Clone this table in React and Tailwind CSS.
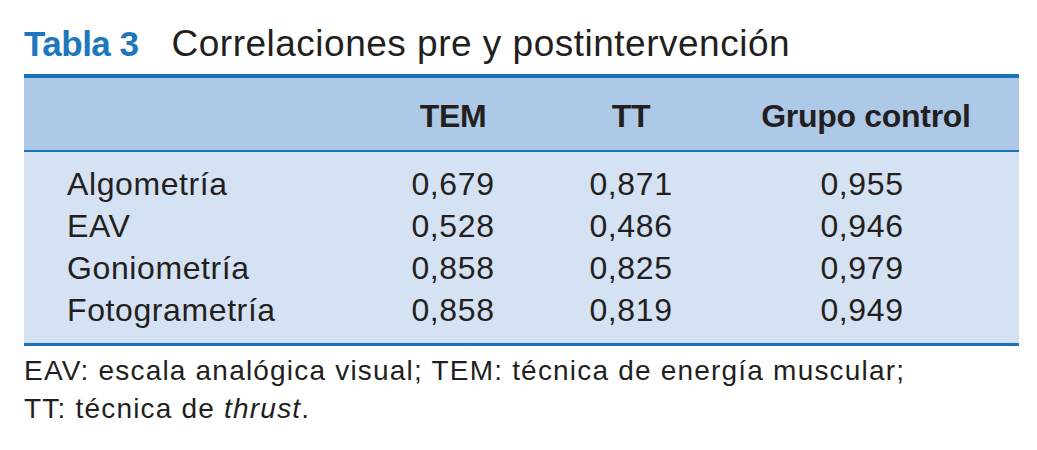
import React from 'react';

const rows = [
  { label: 'Algometría', tem: '0,679', tt: '0,871', control: '0,955' },
  { label: 'EAV', tem: '0,528', tt: '0,486', control: '0,946' },
  { label: 'Goniometría', tem: '0,858', tt: '0,825', control: '0,979' },
  { label: 'Fotogrametría', tem: '0,858', tt: '0,819', control: '0,949' },
];

const cols = 'grid grid-cols-[341px_176px_180px_290px]';

export default function App() {
  return (
    <div className="w-[1037px] h-[450px] bg-white pl-[24px] pr-[18px] pt-[22px] text-[#231f20] font-['Liberation_Sans',Arial,sans-serif]">
      <div className="flex items-baseline h-[44px] leading-[44px] whitespace-nowrap">
        <span className="text-[35px] font-bold text-[#1c77bd] tracking-[-0.5px]">Tabla 3</span>
        <span className="ml-[33px] text-[37px] tracking-[0.5px]">Correlaciones pre y postintervención</span>
      </div>

      <div className="mt-[8px] border-t-[4px] border-b-[3px] border-[#1b74b9]">
        <div className={`${cols} h-[74px] bg-[#aec9e7] border-b-[2px] border-[#1b74b9] pt-[3px] text-[32px] font-bold leading-[70px] tracking-[-0.3px]`}>
          <div></div>
          <div className="text-center">TEM</div>
          <div className="text-center">TT</div>
          <div className="text-center">Grupo control</div>
        </div>
        <div className="bg-[#d5e2f3] pt-[11px] pb-[12px] text-[32px] leading-[42px] tracking-[0.6px]">
          {rows.map((row) => (
            <div key={row.label} className={cols}>
              <div className="pl-[43px]">{row.label}</div>
              <div className="text-center">{row.tem}</div>
              <div className="text-center">{row.tt}</div>
              <div className="text-center pr-[8px]">{row.control}</div>
            </div>
          ))}
        </div>
      </div>

      <p className="mt-[6px] text-[28px] leading-[38px] tracking-[1.2px] whitespace-nowrap">
        EAV: escala analógica visual; TEM: técnica de energía muscular;
        <br />
        TT: técnica de <i>thrust</i>.
      </p>
    </div>
  );
}
